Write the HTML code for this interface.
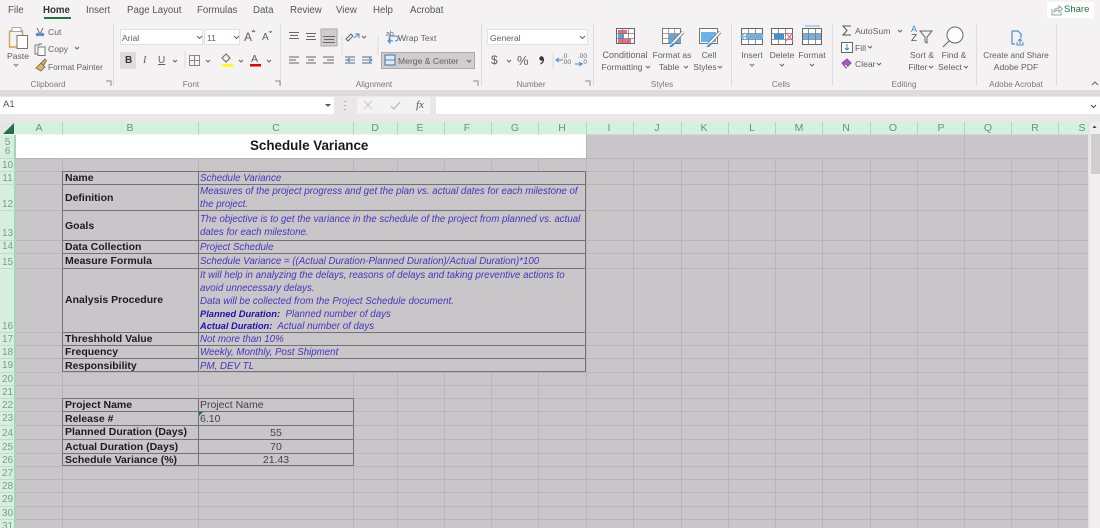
<!DOCTYPE html>
<html><head><meta charset="utf-8"><style>
html,body{margin:0;padding:0;background:#f4f2f3}
#p{position:relative;width:1100px;height:528px;overflow:hidden;background:#f4f2f3;font-family:"Liberation Sans",sans-serif;color:#5f5d5c;filter:blur(.35px)}
#p span{position:absolute;white-space:nowrap}
svg{position:absolute;left:0;top:0}
.m{font-size:9.700px;line-height:14px;color:#555;top:3.500px}
.r{font-size:8.600px;line-height:12px;color:#625f5f}
.c{text-align:center;transform:translateX(-50%)}
.g{font-size:8.200px;line-height:11px;color:#7b7878;top:79px;transform:translateX(-50%)}
.h{font-size:10.500px;line-height:12px;top:122px;color:#6f8f7c;transform:translateX(-50%)}
.n{font-size:10px;line-height:12px;color:#7f9a88;left:0;width:15px;text-align:center;margin-top:1px}
.b{font-size:10.500px;line-height:13px;font-weight:bold;color:#1c1c1c;left:65px}
.i{font-size:9.720px;line-height:13px;font-style:italic;color:#4436bd;left:200px}
.i b{font-size:9.300px;color:#1a0fb0}
.d{font-size:10.500px;line-height:13px;color:#444}
</style></head><body><div id="p">
<svg width="1100" height="528" viewBox="0 0 1100 528" fill="none">
<rect x="0" y="90" width="1100" height="6" fill="#dcdadb"/>
<rect x="0" y="96" width="1100" height="26" fill="#e9e7e8"/>
<rect x="0" y="97" width="334" height="17" fill="#fff"/>
<rect x="357" y="97" width="73" height="17" fill="#f4f3f3"/>
<rect x="436" y="97" width="664" height="17" fill="#fff"/>
<path d="M325 104l3 3 3-3z" fill="#555"/><path d="M1091 105l2.500 2.500 2.500-2.500" stroke="#444"/>
<path d="M345 101v1M345 105v1M345 109v1" stroke="#777"/>
<path d="M364 101l8 8M372 101l-8 8" stroke="#c9c9c9"/><path d="M391 106l3 3 6-7" stroke="#b5b5b5" stroke-width="1.200"/>
<rect x="0" y="122" width="1090" height="12" fill="#e6e4e5"/>
<rect x="16" y="122" width="1072" height="12.500" fill="#d4f0de"/>
<rect x="0" y="135" width="15" height="393" fill="#d6f0df"/>
<rect x="14" y="135" width="2" height="393" fill="#a3d6b6"/>
<path d="M14 123v11H3z" fill="#217346"/>
<path d="M62.500 122v13M198.500 122v13M353.500 122v13M397.500 122v13M444.500 122v13M491.500 122v13M538.500 122v13M586.500 122v13M633.500 122v13M681.500 122v13M728.500 122v13M775.500 122v13M822.500 122v13M870.500 122v13M917.500 122v13M964.500 122v13M1011.500 122v13M1058.500 122v13" stroke="#b5d2c0"/>
<path d="M0 158.500h15M0 171.500h15M0 184.500h15M0 210.500h15M0 240.500h15M0 253.500h15M0 268.500h15M0 332.500h15M0 345.500h15M0 358.500h15M0 372.500h15M0 385.500h15M0 398.500h15M0 411.500h15M0 425.500h15M0 439.500h15M0 453.500h15M0 466.500h15M0 479.500h15M0 492.500h15M0 506.500h15M0 519.500h15" stroke="#c0dccb"/>
<rect x="16" y="134.500" width="1072" height="394" fill="#c9c6c9"/>
<rect x="1088" y="122" width="12" height="406" fill="#e6e4e5"/>
<rect x="16" y="134.500" width="570" height="23.500" fill="#fff"/>
<path d="M62.500 158v370M198.500 158v370M353.500 158v13M353.500 372v156M397.500 158v13M397.500 372v156M444.500 158v13M444.500 372v156M491.500 158v13M491.500 372v156M538.500 158v13M538.500 372v156M586.500 135v393M633.500 158v370M681.500 158v370M728.500 158v370M775.500 158v370M822.500 158v370M870.500 158v370M917.500 158v370M964.500 135v393M1011.500 158v370M1058.500 158v370" stroke="#b9b6b9"/>
<path d="M16 158.500h1072M586 171.500h502M586 184.500h502M586 210.500h502M586 240.500h502M586 253.500h502M586 268.500h502M586 332.500h502M586 345.500h502M586 358.500h502M16 372.500h1072M16 385.500h1072M16 398.500h1072M353 411.500h735M353 425.500h735M353 439.500h735M353 453.500h735M16 466.500h1072M16 479.500h1072M16 492.500h1072M16 506.500h1072M16 519.500h1072M16 171.500h46M16 184.500h46M16 210.500h46M16 240.500h46M16 253.500h46M16 268.500h46M16 332.500h46M16 345.500h46M16 358.500h46M16 411.500h46M16 425.500h46M16 439.500h46M16 453.500h46" stroke="#b9b6b9"/>
<path d="M62.500 171v201M198.500 171v201M585.500 171v201M62 171.500h524M62 184.500h524M62 210.500h524M62 240.500h524M62 253.500h524M62 268.500h524M62 332.500h524M62 345.500h524M62 358.500h524M62 371.500h524" stroke="#737175"/>
<path d="M62.500 398v68M198.500 398v68M353.500 398v68M62 398.500h292M62 411.500h292M62 425.500h292M62 439.500h292M62 453.500h292M62 465.500h292" stroke="#737175"/>
<path d="M199 412h4l-4 4z" fill="#217346"/>
<rect x="1090" y="122" width="10" height="406" fill="#f0eeef"/>
<rect x="1091" y="134" width="9" height="40" fill="#cfcdce"/>
<path d="M1092.500 128l2-2.500 2 2.500z" fill="#444"/>
<path d="M113.500 24v62M280.500 24v62M481.500 24v62M593.500 24v62M731.500 24v62M832.500 24v62M976.500 24v62M1056.500 24v62" stroke="#dcdadb" stroke-width="1"/>
<path d="M342 36v20M378 36v20M185 51v17" stroke="#dcdadb"/>
<rect x="44" y="17" width="27" height="2" fill="#217346"/>
<rect x="1047" y="2" width="47" height="16" fill="#fff"/>
<path d="M1052 9v6h9v-3M1054 12c0-3 2-4 5-4V6l3.500 3-3.500 3v-2c-2 0-3 .5-5 2z" stroke="#8fa89a" fill="none"/>
<!-- paste -->
<path d="M9.500 31h4v-2h5v2h4v5M9.500 31v16h7" stroke="#d69f4d" stroke-width="1.400"/>
<rect x="12" y="27.500" width="9" height="4" fill="#fff" stroke="#8b8b8b" stroke-width=".7"/>
<rect x="17" y="35.500" width="10.500" height="13" fill="#fff" stroke="#777"/>
<!-- cut copy painter -->
<path d="M37 28l4 8M43 28l-4 8" stroke="#777"/><circle cx="37.500" cy="34.500" r="1.800" fill="#5b8fc9"/><circle cx="42.500" cy="34.500" r="1.800" fill="#5b8fc9"/>
<path d="M35 45h4v-1l3 0M35 45v9h3" stroke="#777"/><rect x="38" y="47" width="7" height="8.500" fill="#fff" stroke="#777"/>
<path d="M36 68l5-5 4 4-4 4zM41 63l4-4 1.500 1.500-3 5" fill="#e2b15e" stroke="#666" stroke-width=".8"/>
<!-- font -->
<rect x="120.500" y="29.500" width="82" height="15" fill="#fff" stroke="#e2e0e1"/>
<rect x="204.500" y="29.500" width="35" height="15" fill="#fff" stroke="#e2e0e1"/>
<path d="M197 36l2.500 2.500L202 36M234 36l2.500 2.500L239 36" stroke="#666"/>
<path d="M252 32l1.500-1.500L255 32" stroke="#555"/><path d="M269 31l1.500 1.500L272 31" stroke="#3a8bd0"/>
<rect x="120" y="52" width="16" height="17" fill="#dddbdc"/>
<path d="M173 60l2 2 2-2M206 60l2 2 2-2M239 60l2 2 2-2M267 60l2 2 2-2" stroke="#666"/>
<rect x="189.500" y="55.500" width="10" height="10" stroke="#888"/><path d="M194.500 55v11M189 60.500h11" stroke="#888"/>
<path d="M222 58l4-4 4 4-4 4z" stroke="#666"/><rect x="222" y="64" width="11" height="2.500" fill="#ffff00"/>
<rect x="250" y="64" width="11" height="2.500" fill="#e80000"/>
<!-- alignment -->
<rect x="321" y="29" width="16" height="17" fill="#cfcdce" stroke="#aaa"/>
<path d="M289 32.500h10M290 35.500h8M289 38.500h10M306 33.500h10M307 36.500h8M306 39.500h10M323 36.500h12M324 39.500h10M323 42.500h12M289 57h10M289 60h7M289 63h10M306 57h10M308 60h6M306 63h10M323 57h11M327 60h7M323 63h11M345 57h10M345 63h10M362 57h10M362 63h10" stroke="#666"/>
<path d="M345 60h10M350 58l-3 2 3 2M362 60h10M369 58l3 2-3 2" stroke="#3a8bd0"/>
<path d="M346 39l5-5 2 2-5 5z" stroke="#666"/><path d="M354 38l5-4M355 34h4v4" stroke="#3a8bd0"/>
<path d="M362 36l2 2 2-2" stroke="#666"/>
<path d="M393 41c-5 0-5-5-1-5h4c3 0 3 5-1 5M388 41l2-2v4z" stroke="#3a8bd0"/>
<rect x="381.500" y="52.500" width="93" height="16" fill="#cfcdce" stroke="#aaa"/>
<rect x="385" y="55" width="10" height="10" fill="#dfeaf5" stroke="#4a6f98"/><path d="M385 60h10" stroke="#3a8bd0"/>
<path d="M467 60l2 2 2-2" stroke="#666"/>
<!-- number -->
<rect x="487.500" y="29.500" width="100" height="15" fill="#fff" stroke="#e2e0e1"/>
<path d="M580 36l2.500 2.500L585 36M507 60l2 2 2-2" stroke="#666"/>
<path d="M553 53v16" stroke="#dcdadb"/>
<path d="M556 60h7M559 58l-3 2 3 2M575 64h7M579 62l3 2-3 2" stroke="#3a8bd0"/>
<circle cx="541.500" cy="58.500" r="2.200" fill="#333"/><path d="M543.500 59c0 2-1 4-3 5" stroke="#333" stroke-width="1.200"/>
<!-- styles -->
<g transform="translate(616,28)"><rect x=".5" y=".5" width="18" height="15" fill="#fff" stroke="#666"/><rect x="2" y="2" width="9" height="4" fill="#ef6a7d"/><rect x="2" y="6" width="6" height="5" fill="#5fa3dc"/><rect x="2" y="11" width="13" height="4" fill="#ef6a7d"/><path d="M6.500 1v14M12.500 1v14M1 5.500h17M1 10.500h17" stroke="#777" stroke-width=".7"/></g>
<g transform="translate(662,28)"><rect x=".5" y=".5" width="18" height="15" fill="#fff" stroke="#777"/><rect x="7" y="6" width="12" height="9" fill="#5fa8e2"/><path d="M6.500 1v14M12.500 1v14M1 5.500h17M1 10.500h17" stroke="#888" stroke-width=".7"/><path d="M21 4L9 17" stroke="#777" stroke-width="3.500"/><path d="M21 4L9 17" stroke="#fff" stroke-width="1.800"/><path d="M7 19l4-4 2 1-3 3z" fill="#3b8fd4"/></g>
<g transform="translate(699,28)"><rect x=".5" y=".5" width="18" height="15" fill="#fff" stroke="#777"/><rect x="2" y="4" width="15" height="10" fill="#6cb2e8"/><path d="M21 4L9 17" stroke="#777" stroke-width="3.500"/><path d="M21 4L9 17" stroke="#fff" stroke-width="1.800"/><path d="M7 19l4-4 2 1-3 3z" fill="#3b8fd4"/></g>
<!-- cells -->
<g transform="translate(741,28)"><rect x=".5" y=".5" width="21" height="16" fill="#fff" stroke="#666"/><path d="M7.500 1v15M14.500 1v15M1 5.500h20M1 11.500h20" stroke="#777" stroke-width=".8"/><rect x="5" y="6" width="17" height="5" fill="#6cb2e8"/><path d="M0 8.500h8M4 5L0 8.500 4 12" stroke="#6cb2e8" stroke-width="1.200"/></g>
<g transform="translate(771,28)"><rect x=".5" y=".5" width="21" height="16" fill="#fff" stroke="#666"/><path d="M7.500 1v15M14.500 1v15M1 5.500h20M1 11.500h20" stroke="#777" stroke-width=".8"/><rect x="3" y="6" width="10" height="5" fill="#3e93d8"/><path d="M15 5l7 8M22 5l-7 8" stroke="#e8687a" stroke-width="1.200"/></g>
<g transform="translate(802,25)"><path d="M3 1h15" stroke="#6cb2e8"/><rect x=".5" y="3.500" width="19" height="16" fill="#fff" stroke="#666"/><rect x="1" y="9" width="18" height="5" fill="#6cb2e8"/><path d="M6.500 4v15M13.500 4v15M1 8.500h18M1 14.500h18" stroke="#777" stroke-width=".8"/></g>
<!-- editing -->
<path d="M851 26h-8l4 4.500-4 4.500h8" stroke="#555"/>
<rect x="841.500" y="42.500" width="11" height="10" fill="#fff" stroke="#666"/><path d="M847 44v6M845 48l2 2 2-2" stroke="#3a8bd0"/>
<path d="M842 63l5-4 4 4-5 5z" fill="#a855c9" stroke="#8b45a8"/><path d="M845 65l3 3" stroke="#fff"/>
<path d="M920 31h12l-5 6v6l-2-1v-5z" stroke="#666"/>
<circle cx="955" cy="35" r="8" fill="#fff" stroke="#666"/><path d="M949 41l-6 6" stroke="#666"/>
<path d="M898 30l2 2 2-2M868 46l2 2 2-2M877 63l2 2 2-2" stroke="#666"/>
<!-- acrobat -->
<path d="M1012 31v13h3M1012 31h6l3 3v4" stroke="#4a8fd0" stroke-width="1.200"/><path d="M1017 42v3h6v-3M1020 44v-5M1018 41l2-2 2 2" stroke="#4a8fd0"/>
<!-- chevrons -->
<path d="M14 64l2 2 2-2M75 47l2 2 2-2M646 66l2 2 2-2M684 66l2 2 2-2M718 66l2 2 2-2M750 64l2 2 2-2M780 64l2 2 2-2M810 64l2 2 2-2M929 66l2 2 2-2M964 66l2 2 2-2M1092 85l3-3 3 3" stroke="#666"/>
<path d="M106 81h5v5M275 81h5v5M473 81h5v5M585 81h5v5" stroke="#888"/>
</svg>

<span class="m" style="left:8px">File</span>
<span class="m" style="left:43px;font-weight:bold;color:#333">Home</span>
<span class="m" style="left:86px">Insert</span>
<span class="m" style="left:127px">Page Layout</span>
<span class="m" style="left:197px">Formulas</span>
<span class="m" style="left:253px">Data</span>
<span class="m" style="left:290px">Review</span>
<span class="m" style="left:336px">View</span>
<span class="m" style="left:373px">Help</span>
<span class="m" style="left:410px">Acrobat</span>
<span style="left:1064px;top:3px;font-size:9.500px;line-height:14px;color:#217346">Share</span>

<span class="r" style="left:7px;top:50px">Paste</span>
<span class="r" style="left:48px;top:26px">Cut</span>
<span class="r" style="left:48px;top:43px">Copy</span>
<span class="r" style="left:48px;top:61px;font-size:8.300px">Format Painter</span>
<span class="g" style="left:48px">Clipboard</span>
<span class="r" style="left:122px;top:32px">Arial</span>
<span class="r" style="left:207px;top:32px">11</span>
<span style="left:244px;top:30px;font-size:12px;line-height:14px">A</span>
<span style="left:262px;top:31px;font-size:10px;line-height:14px">A</span>
<span style="left:125px;top:54px;font-size:10px;line-height:13px;font-weight:bold;color:#333">B</span>
<span style="left:143px;top:54px;font-size:10px;line-height:13px;font-style:italic;font-family:'Liberation Serif',serif">I</span>
<span style="left:158px;top:54px;font-size:10px;line-height:13px;text-decoration:underline">U</span>
<span style="left:251px;top:53px;font-size:10.500px;line-height:12px">A</span>
<span class="g" style="left:191px">Font</span>
<span class="g" style="left:374px">Alignment</span>
<span style="left:386px;top:31px;font-size:7px;line-height:8px;color:#666">ab</span>
<span class="r" style="left:398px;top:32px">Wrap Text</span>
<span class="r" style="left:398px;top:55px">Merge &amp; Center</span>
<span class="r" style="left:490px;top:32px">General</span>
<span style="left:491px;top:53px;font-size:12px;line-height:15px">$</span>
<span style="left:517px;top:53px;font-size:13px;line-height:15px">%</span>
<span style="left:562px;top:54px;font-size:6.500px;line-height:6px;color:#666">.0<br>.00</span>
<span style="left:578px;top:54px;font-size:6.500px;line-height:6px;color:#666;text-align:right">.00<br>.0</span>
<span class="g" style="left:531px">Number</span>

<span class="r c" style="left:625px;top:49px;font-size:9px">Conditional</span>
<span class="r c" style="left:622px;top:61px">Formatting</span>
<span class="r c" style="left:672px;top:49px">Format as</span>
<span class="r c" style="left:669px;top:61px">Table</span>
<span class="r c" style="left:709px;top:49px">Cell</span>
<span class="r c" style="left:705px;top:61px">Styles</span>
<span class="g" style="left:662px">Styles</span>
<span class="r c" style="left:752px;top:49px">Insert</span>
<span class="r c" style="left:782px;top:49px">Delete</span>
<span class="r c" style="left:812px;top:49px">Format</span>
<span class="g" style="left:781px">Cells</span>
<span class="r" style="left:855px;top:25px">AutoSum</span>
<span class="r" style="left:855px;top:42px">Fill</span>
<span class="r" style="left:855px;top:58px">Clear</span>
<span style="left:911px;top:25px;font-size:9px;line-height:9px;color:#3a8bd0">A</span>
<span style="left:911px;top:34px;font-size:10px;line-height:10px;color:#555">Z</span>
<span class="r c" style="left:922px;top:49px">Sort &amp;</span>
<span class="r c" style="left:918px;top:61px">Filter</span>
<span class="r c" style="left:954px;top:49px">Find &amp;</span>
<span class="r c" style="left:950px;top:61px">Select</span>
<span class="g" style="left:904px">Editing</span>
<span class="r c" style="left:1016px;top:49px;font-size:8.300px">Create and Share</span>
<span class="r c" style="left:1016px;top:61px">Adobe PDF</span>
<span class="g" style="left:1016px">Adobe Acrobat</span>

<span style="left:3px;top:99px;font-size:9.500px;line-height:12px;color:#555">A1</span>
<span style="left:416px;top:98px;font-size:11px;line-height:14px;font-style:italic;font-family:'Liberation Serif',serif;color:#555">fx</span>

<span class="h" style="left:39px">A</span><span class="h" style="left:130px">B</span><span class="h" style="left:276px">C</span><span class="h" style="left:375px">D</span><span class="h" style="left:420px">E</span><span class="h" style="left:467px">F</span><span class="h" style="left:515px">G</span><span class="h" style="left:562px">H</span><span class="h" style="left:609px">I</span><span class="h" style="left:657px">J</span><span class="h" style="left:704px">K</span><span class="h" style="left:752px">L</span><span class="h" style="left:799px">M</span><span class="h" style="left:846px">N</span><span class="h" style="left:893px">O</span><span class="h" style="left:941px">P</span><span class="h" style="left:988px">Q</span><span class="h" style="left:1035px">R</span><span class="h" style="left:1082px">S</span>

<span class="n" style="top:136px">5</span><span class="n" style="top:145px">6</span><span class="n" style="top:159px">10</span><span class="n" style="top:172px">11</span><span class="n" style="top:198px">12</span><span class="n" style="top:227px">13</span><span class="n" style="top:240px">14</span><span class="n" style="top:256px">15</span><span class="n" style="top:320px">16</span><span class="n" style="top:333px">17</span><span class="n" style="top:346px">18</span><span class="n" style="top:359px">19</span><span class="n" style="top:373px">20</span><span class="n" style="top:386px">21</span><span class="n" style="top:399px">22</span><span class="n" style="top:412px">23</span><span class="n" style="top:427px">24</span><span class="n" style="top:441px">25</span><span class="n" style="top:454px">26</span><span class="n" style="top:467px">27</span><span class="n" style="top:480px">28</span><span class="n" style="top:493px">29</span><span class="n" style="top:507px">30</span><span class="n" style="top:520px">31</span>

<span style="left:250px;top:138px;font-size:13.400px;line-height:15px;font-weight:bold;color:#1a1a1a">Schedule Variance</span>

<span class="b" style="top:172px">Name</span>
<span class="b" style="top:192px">Definition</span>
<span class="b" style="top:220px">Goals</span>
<span class="b" style="top:241px">Data Collection</span>
<span class="b" style="top:255px">Measure Formula</span>
<span class="b" style="top:294px">Analysis Procedure</span>
<span class="b" style="top:333px">Threshhold Value</span>
<span class="b" style="top:346px">Frequency</span>
<span class="b" style="top:360px">Responsibility</span>

<span class="i" style="top:172px">Schedule Variance</span>
<span class="i" style="top:185px">Measures of the project progress and get the plan vs. actual dates for each milestone of</span>
<span class="i" style="top:198px">the project.</span>
<span class="i" style="top:213px">The objective is to get the variance in the schedule of the project from planned vs. actual</span>
<span class="i" style="top:226px">dates for each milestone.</span>
<span class="i" style="top:241px">Project Schedule</span>
<span class="i" style="top:255px">Schedule Variance = ((Actual Duration-Planned Duration)/Actual Duration)*100</span>
<span class="i" style="top:269px">It will help in analyzing the delays, reasons of delays and taking preventive actions to</span>
<span class="i" style="top:282px">avoid unnecessary delays.</span>
<span class="i" style="top:295px">Data will be collected from the Project Schedule document.</span>
<span class="i" style="top:307.500px"><b>Planned Duration:</b>&nbsp; Planned number of days</span>
<span class="i" style="top:320px"><b>Actual Duration:</b>&nbsp; Actual number of days</span>
<span class="i" style="top:333px">Not more than 10%</span>
<span class="i" style="top:346px">Weekly, Monthly, Post Shipment</span>
<span class="i" style="top:359.500px">PM, DEV TL</span>

<span class="b" style="top:399px">Project Name</span>
<span class="b" style="top:413px">Release #</span>
<span class="b" style="top:426px">Planned Duration (Days)</span>
<span class="b" style="top:440.500px">Actual Duration (Days)</span>
<span class="b" style="top:454px">Schedule Variance (%)</span>
<span class="d" style="left:200px;top:399px">Project Name</span>
<span class="d" style="left:200px;top:413px">6.10</span>
<span class="d c" style="left:276px;top:426.500px">55</span>
<span class="d c" style="left:276px;top:440.500px">70</span>
<span class="d c" style="left:276px;top:454px">21.43</span>
</div></body></html>
